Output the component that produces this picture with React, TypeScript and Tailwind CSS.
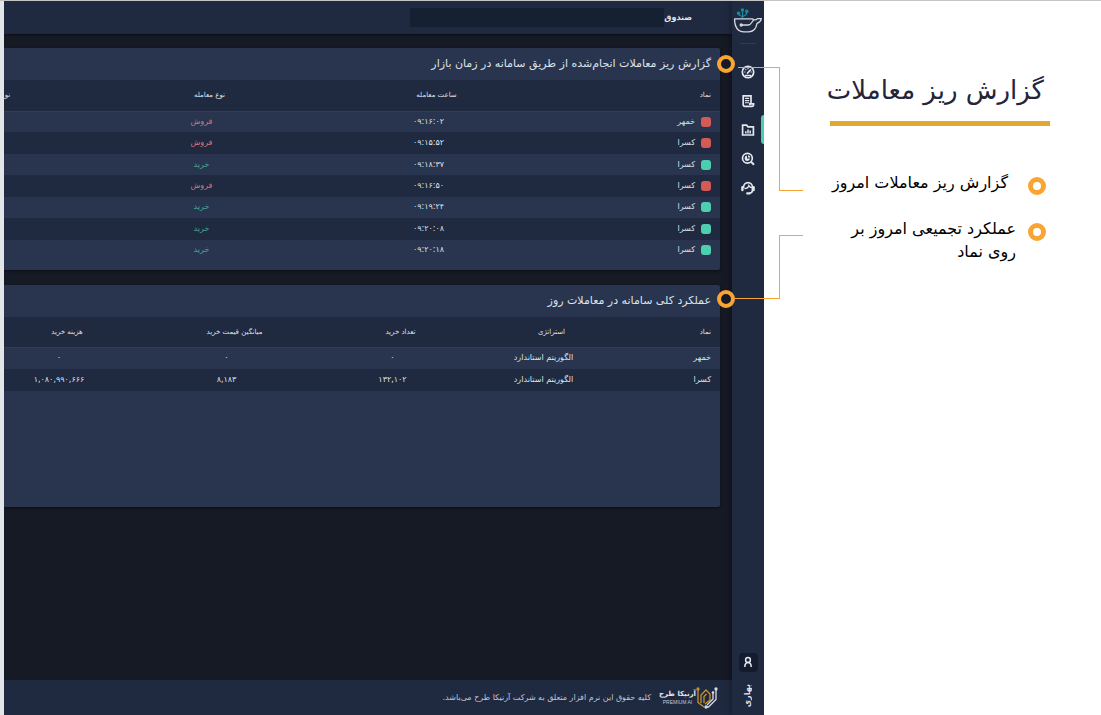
import React from 'react';
import clsx from 'clsx';

type Trade = { symbol: string; time: string; side: 'buy' | 'sell' };

const trades: Trade[] = [
  { symbol: 'خمهر', time: '۰۹:۱۶:۰۲', side: 'sell' },
  { symbol: 'کسرا', time: '۰۹:۱۵:۵۲', side: 'sell' },
  { symbol: 'کسرا', time: '۰۹:۱۸:۳۷', side: 'buy' },
  { symbol: 'کسرا', time: '۰۹:۱۶:۵۰', side: 'sell' },
  { symbol: 'کسرا', time: '۰۹:۱۹:۲۴', side: 'buy' },
  { symbol: 'کسرا', time: '۰۹:۲۰:۰۸', side: 'buy' },
  { symbol: 'کسرا', time: '۰۹:۲۰:۱۸', side: 'buy' },
];

const summary = [
  { symbol: 'خمهر', strategy: 'الگوریتم استاندارد', count: '۰', average: '۰', cost: '۰' },
  {
    symbol: 'کسرا',
    strategy: 'الگوریتم استاندارد',
    count: '۱۳۲,۱۰۲',
    average: '۸,۱۸۳',
    cost: '۱,۰۸۰,۹۹۰,۶۶۶',
  },
];

const GaugeIcon = () => (
  <svg viewBox="0 0 16 16" className="size-4" fill="none" stroke="currentColor" strokeWidth="1.7">
    <circle cx="8" cy="8" r="5.7" />
    <path d="M7.6 9 10.4 6" strokeWidth="1.8" strokeLinecap="round" />
    <path d="M4.2 8h1.2M5.4 5.2l.8.8M8 4v1.2M11.8 8h-1.2M5 11.4h6" strokeWidth="1.1" />
  </svg>
);

const ReportIcon = () => (
  <svg viewBox="0 0 16 16" className="size-4" fill="none" stroke="currentColor" strokeWidth="1.7">
    <path d="M11 10V2.8H3.2v8.8c0 1 .7 1.8 1.6 1.8h7.4c.9 0 1.4-.7 1.4-1.6v-1h-3.8v1.2" />
    <path d="M5 5.4h4.2M5 7.6h4.2M5 9.8h4.2" strokeWidth="1.1" />
  </svg>
);

const FolderIcon = () => (
  <svg viewBox="0 0 16 16" className="size-4" fill="none" stroke="currentColor" strokeWidth="1.7">
    <path d="M2.6 3.2h4L8 4.8h5.4v8.2H2.6z" />
    <path d="M5.8 11.4V9.2M8 11.4V7.4M10.2 11.4V8.6" strokeWidth="1.5" />
  </svg>
);

const SearchIcon = () => (
  <svg viewBox="0 0 16 16" className="size-4" fill="none" stroke="currentColor" strokeWidth="1.7">
    <circle cx="7.4" cy="7.2" r="4.9" />
    <path d="m11 10.8 3 3" strokeWidth="2" />
    <path d="M7 4.6v3h3A2.7 2.7 0 1 1 7 4.6z" fill="currentColor" stroke="none" />
    <path d="M8 4.2a2.7 2.7 0 0 1 2.4 2.400H8z" fill="currentColor" stroke="none" />
  </svg>
);

const SupportIcon = () => (
  <svg viewBox="0 0 16 16" className="size-4" fill="none" stroke="currentColor" strokeWidth="1.6">
    <path d="M3.6 8V7a4.4 4.4 0 0 1 8.8 0v3.2c0 1.800-1.200 3-3.200 3" />
    <path d="M2.400 7.200v2.800M13.600 7.200v2.800" strokeWidth="2.400" strokeLinecap="round" />
    <path d="M4.400 8.600c2.400 0 4-1.200 4.400-3 .6 1.200 1.800 2 3.200 2" strokeWidth="1.300" />
    <path d="M7.200 13.400h2.400" strokeWidth="2.200" strokeLinecap="round" />
  </svg>
);

const UserIcon = () => (
  <svg viewBox="0 0 12 12" className="size-3" fill="none" stroke="currentColor" strokeWidth="1.5">
    <circle cx="6" cy="4" r="2.4" />
    <path d="M2.8 11c0-2.8 1.2-4.4 3.2-4.4S9.2 8.2 9.2 11" />
  </svg>
);

const BowlLogo = () => (
  <svg viewBox="0 0 30 28" className="h-7 w-[30px]" fill="none">
    <g stroke="#168aa3" strokeWidth="1.2">
      <path d="M9.5 11V3.5M9.5 9.800 6 8V6.500M9.500 9.800l4-2.400V5" />
      <g fill="#168aa3">
        <circle cx="9.5" cy="3" r="1.1" />
        <circle cx="5.6" cy="6.2" r="1.2" />
        <circle cx="13.8" cy="4.4" r="1.2" />
      </g>
    </g>
    <g stroke="#d5d9e0" strokeWidth="1.3" strokeLinejoin="round">
      <path d="M1.6 11.800h17.800c1.600 1.500 3.700 1.500 5-.2h4c-.6 2.800-2.400 4.200-4.400 4.800-.8 5.400-3.600 8.400-8.400 8.400H11c-5.800 0-9.400-4.400-9.400-13z" />
      <path d="M9 18h6.5c1.6 0 2.600-1.400 3.600-3l1.800-2.600" />
      <circle cx="8.2" cy="18" r="1" fill="#d5d9e0" />
    </g>
  </svg>
);

const ArnikaLogo = () => (
  <svg viewBox="0 0 22 22" className="size-[22px]" fill="none" strokeWidth="1.3">
    <g stroke="#c8922a">
      <path d="M2 3v12.500L8 20M5 16V8l5-5 4 4v6l-5 4" />
      <path d="M8 16V9.500L10.500 7" />
      <circle cx="2" cy="2" r="1" fill="#c8922a" />
    </g>
    <g stroke="#d9dce3">
      <path d="M20 3v9.500L12.500 20H10M17 6v6l-6 6" />
      <circle cx="20" cy="2" r="1" fill="#d9dce3" />
      <circle cx="17" cy="5.5" r=".7" fill="#d9dce3" />
      <circle cx="10" cy="20" r="1" fill="#d9dce3" />
    </g>
  </svg>
);

const navItems = [
  { icon: GaugeIcon, label: 'داشبورد', active: false },
  { icon: ReportIcon, label: 'سفارش‌ها', active: false },
  { icon: FolderIcon, label: 'گزارش‌ها', active: true },
  { icon: SearchIcon, label: 'جستجو', active: false },
  { icon: SupportIcon, label: 'پشتیبانی', active: false },
];

const Sidebar = () => (
  <aside className="z-10 flex w-8 shrink-0 flex-col items-center bg-[#1f2940] text-[#e4e7ee] shadow-[0_0_8px_rgba(0,0,0,0.45)]">
    <div className="mt-1.5">
      <BowlLogo />
    </div>
    <hr className="mt-2 w-4 border-[#303b55]" />
    <nav className="mt-[13px] flex w-full flex-col">
      {navItems.map((item) => (
        <a
          key={item.label}
          href="#"
          aria-label={item.label}
          className={clsx(
            'relative flex h-[29px] w-full items-center justify-center',
            item.active &&
              'before:absolute before:inset-y-0 before:right-0 before:w-[3px] before:rounded-l before:bg-[#4dcfaf]',
          )}
        >
          <item.icon />
        </a>
      ))}
    </nav>
    <div className="mt-auto flex flex-col items-center gap-3 pb-2">
      <button
        type="button"
        aria-label="حساب کاربری"
        className="flex size-[19px] items-center justify-center rounded bg-[#141b2e]"
      >
        <UserIcon />
      </button>
      <span className="rotate-180 text-[8px] leading-4 font-bold [writing-mode:vertical-rl]">بهاری</span>
    </div>
  </aside>
);

const Card = ({ title, children, className }: { title: string; children: React.ReactNode; className?: string }) => (
  <section className={clsx('overflow-hidden rounded-r-xs bg-[#29354f] shadow-[0_1px_3px_rgba(0,0,0,0.5)]', className)}>
    <h2 className="flex h-8 items-center px-[9px] text-[11px] text-[#dfe2e9]">{title}</h2>
    {children}
  </section>
);

const headCell = 'border-b border-[#333d57] p-0 pl-4 text-center font-normal';

const TradesTable = () => (
  <table className="h-[181px] w-[859px] table-fixed text-[8px] text-[#dfe2e9]">
    <colgroup>
      <col className="w-[178px]" />
      <col className="w-[227px]" />
      <col className="w-[227px]" />
      <col className="w-[227px]" />
    </colgroup>
    <thead>
      <tr className="h-[31px] bg-[#1f2940] text-[7px]">
        <th className="border-b border-[#333d57] p-0 pr-[9px] text-right font-normal">نماد</th>
        <th className={headCell}>ساعت معامله</th>
        <th className={headCell}>نوع معامله</th>
        <th className={headCell}>نوع سفارش گذاری</th>
      </tr>
    </thead>
    <tbody>
      {trades.map((trade, index) => (
        <tr key={index} className="h-[21px] even:bg-[#1f2940]">
          <td className="p-0 pr-[9px]">
            <div className="flex items-center gap-1.5">
              <span className={clsx('size-[10px] rounded-[3px]', trade.side === 'sell' ? 'bg-[#d45b55]' : 'bg-[#4dcfaf]')} />
              {trade.symbol}
            </div>
          </td>
          <td className="p-0 text-center">{trade.time}</td>
          <td className={clsx('p-0 text-center', trade.side === 'sell' ? 'text-[#d8777a]' : 'text-[#48aa98]')}>
            {trade.side === 'sell' ? 'فروش' : 'خرید'}
          </td>
          <td />
        </tr>
      ))}
    </tbody>
  </table>
);

const SummaryTable = () => (
  <table className="w-[742px] table-fixed text-[8px] text-[#dfe2e9]">
    <colgroup>
      <col className="w-[105px]" />
      <col className="w-[143px]" />
      <col className="w-[159px]" />
      <col className="w-[173px]" />
      <col className="w-[162px]" />
    </colgroup>
    <thead>
      <tr className="h-[30px] bg-[#1f2940] text-[7px]">
        <th className="border-b border-[#333d57] p-0 pr-[9px] text-right font-normal">نماد</th>
        <th className={headCell}>استراتژی</th>
        <th className={headCell}>تعداد خرید</th>
        <th className={headCell}>میانگین قیمت خرید</th>
        <th className={headCell}>هزینه خرید</th>
      </tr>
    </thead>
    <tbody>
      {summary.map((row) => (
        <tr key={row.symbol} className="h-[22px] even:bg-[#1f2940]">
          <td className="p-0 pr-[9px]">{row.symbol}</td>
          <td className="p-0 text-center">{row.strategy}</td>
          <td className="p-0 text-center">{row.count}</td>
          <td className="p-0 text-center">{row.average}</td>
          <td className="p-0 text-center">{row.cost}</td>
        </tr>
      ))}
    </tbody>
  </table>
);

const Dashboard = () => (
  <div className="flex min-w-0 flex-1 overflow-hidden border-l-4 border-[#e3e6e9] bg-[#161a25]">
    <Sidebar />
    <div className="flex min-w-0 flex-1 flex-col overflow-hidden">
      <header className="flex h-[33px] items-center bg-[#1f2940] pr-10 text-[#e4e7ee] shadow-[0_1px_2px_rgba(0,0,0,0.5)]">
        <span className="text-[8px] font-bold">صندوق</span>
        <div className="h-[19px] w-[254px] bg-[#162033]" />
      </header>

      <main className="flex flex-1 flex-col gap-[15px] pt-[14px] pr-3">
        <Card title="گزارش ریز معاملات انجام‌شده از طریق سامانه در زمان بازار" className="pb-[9px]">
          <TradesTable />
        </Card>
        <Card title="عملکرد کلی سامانه در معاملات روز" className="min-h-[222px]">
          <SummaryTable />
        </Card>
      </main>

      <footer className="flex h-[35px] items-center bg-[#1f2940] pr-[14px] text-[#c3c8d2]">
        <ArnikaLogo />
        <div className="flex flex-col items-center">
          <span className="text-[7px] leading-[9px] font-bold text-[#e4e7ee]">آرنیکا طرح</span>
          <span className="font-['Liberation_Sans'] text-[5px] leading-[6px]">PREMIUM AI</span>
        </div>
        <p className="mr-2 text-[8px]">کلیه حقوق این نرم افزار متعلق به شرکت آرنیکا طرح می‌باشد.</p>
      </footer>
    </div>
  </div>
);

// Lines that tie each note to its card in the dashboard
const Callouts = () => (
  <svg
    viewBox="0 0 87 320"
    className="pointer-events-none absolute top-0 -left-[47px] z-20 h-[320px] w-[87px]"
    fill="none"
    stroke="#f9a533"
    aria-hidden="true"
  >
    <path d="M21 66.5H62.5V189.5H86" shapeRendering="crispEdges" />
    <path d="M18 297.5H62.5V234.5H86" shapeRendering="crispEdges" />
    <g strokeWidth="4" fill="#161a25">
      <circle cx="9" cy="63" r="7" />
      <circle cx="9" cy="298" r="7" />
    </g>
  </svg>
);

const Notes = () => (
  <section className="relative w-[337px] shrink-0 bg-white pt-[68px] pr-[51px] pl-[66px]">
    <Callouts />
    <h1 className="border-b-[5px] border-[#e2a931] pr-1.5 pb-[10px] text-[26px] leading-[42px] whitespace-nowrap text-[#25253a]">
      گزارش ریز معاملات
    </h1>
    <ul className="mt-[45px] mr-1 flex flex-col gap-[22px] text-[16px] leading-[23px] text-black">
      <li className="flex items-start gap-5">
        <span className="mt-1.5 size-[18px] shrink-0 rounded-full border-[5px] border-[#f9a533]" />
        <span className="whitespace-nowrap">گزارش ریز معاملات امروز</span>
      </li>
      <li className="flex items-start gap-3">
        <span className="mt-1.5 size-[18px] shrink-0 rounded-full border-[5px] border-[#f9a533]" />
        عملکرد تجمیعی امروز بر روی نماد
      </li>
    </ul>
  </section>
);

const App = () => (
  <div dir="rtl" className="flex min-h-screen flex-row-reverse border-t border-[#c4c4c4] font-['DejaVu_Sans',sans-serif]">
    <Dashboard />
    <Notes />
  </div>
);

export default App;
